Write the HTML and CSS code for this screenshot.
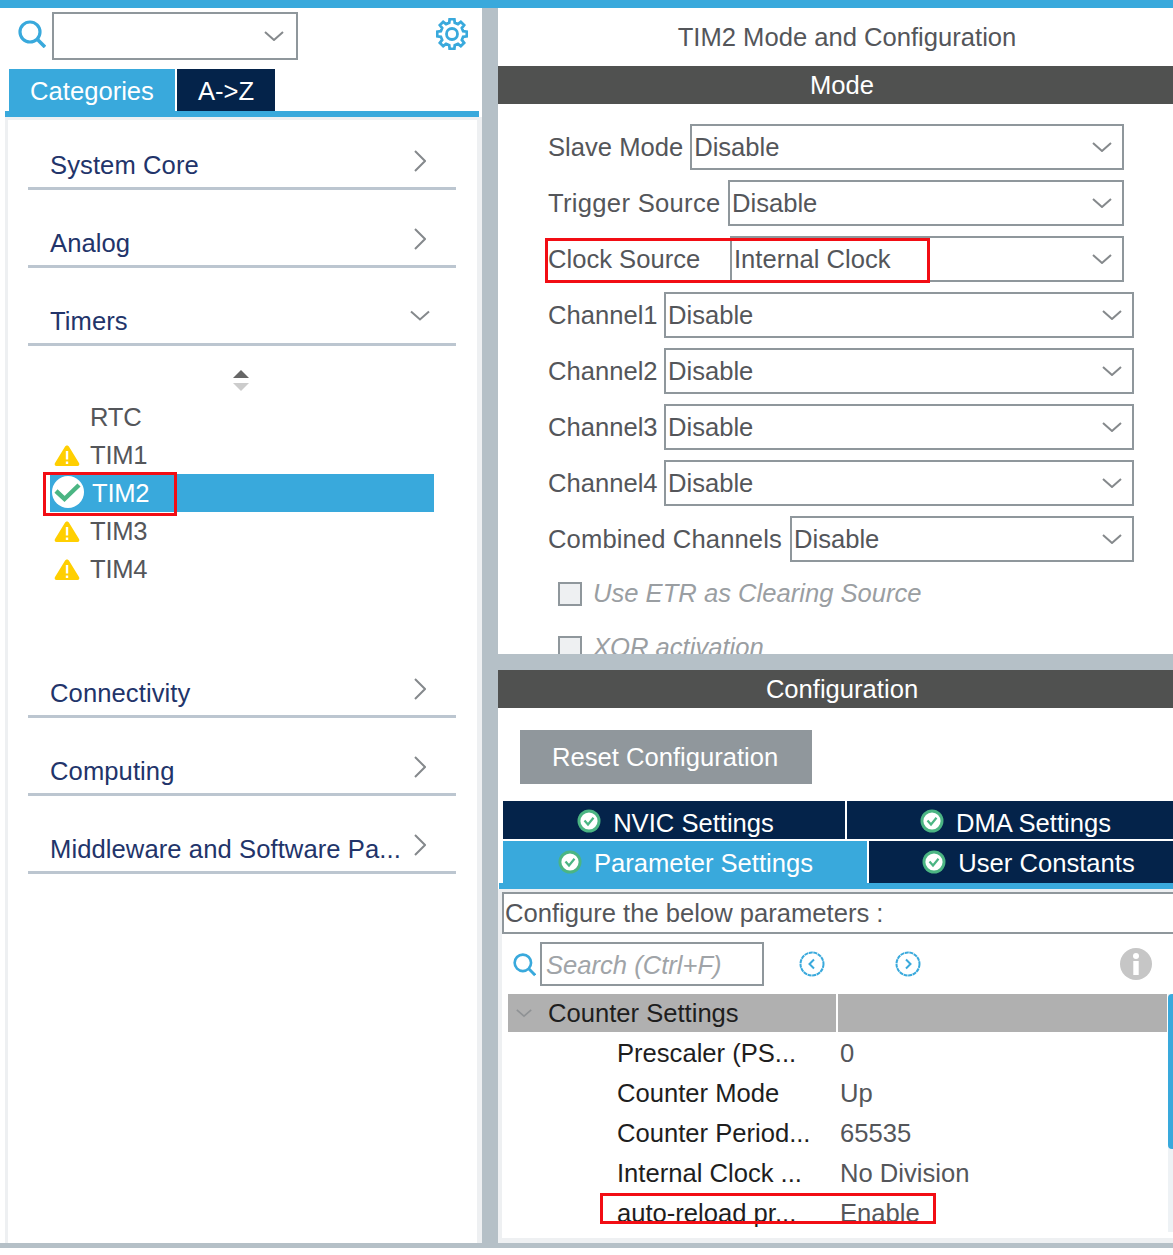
FILE: index.html
```html
<!DOCTYPE html>
<html lang="en">
<head>
<meta charset="utf-8">
<title>TIM2 Mode and Configuration</title>
<link rel="stylesheet" href="styles.css">
</head>
<body>
<svg class="sprite" aria-hidden="true">
  <symbol id="i-search" viewBox="0 0 28 28"><circle cx="12" cy="12" r="10" fill="none" stroke="#39a9dc" stroke-width="3.2"/><path d="M19.5 19.5L27 27" stroke="#39a9dc" stroke-width="3.6" fill="none"/></symbol>
  <symbol id="i-down" viewBox="0 0 20 10"><path d="M1 1L10 9L19 1" fill="none" stroke="#85898c" stroke-width="2"/></symbol>
  <symbol id="i-right" viewBox="0 0 12 22"><path d="M1 1L11 11L1 21" fill="none" stroke="#85898c" stroke-width="2"/></symbol>
  <symbol id="i-warn" viewBox="0 0 26 22"><path d="M13 1.5C14 1.5 14.6 2 15.2 3L25 19C25.8 20.4 25.2 22 23.5 22H2.5C.8 22 .2 20.4 1 19L10.8 3C11.4 2 12 1.5 13 1.5Z" fill="#ffcf01"/><path d="M13 7V15.5M13 17.5V20" stroke="#fff" stroke-width="2.4" fill="none"/></symbol>
  <symbol id="i-ok" viewBox="0 0 24 24"><circle cx="12" cy="12" r="11.5" fill="#4bb583"/><circle cx="12" cy="12" r="8.6" fill="#fff"/><path d="M7.5 11.5L11 15.5L16.5 8.8" fill="none" stroke="#4bb583" stroke-width="2.2"/></symbol>
  <symbol id="i-okbig" viewBox="0 0 32 32"><circle cx="16" cy="16" r="16" fill="#fff"/><path d="M4 15L12.5 23L27 9" fill="none" stroke="#4bb583" stroke-width="4.5"/></symbol>
</svg>

<div class="topbar"></div>
<main class="shell">
  <aside class="left">
    <div class="left-head">
      <svg class="ico-search"><use href="#i-search"/></svg>
      <div class="combo"><svg class="chev-d"><use href="#i-down"/></svg></div>
      <svg class="ico-gear" viewBox="-16 -16 32 32"><polygon fill="none" stroke="#39a9dc" stroke-width="2.8" points="-2.78,-11.16 -2.35,-14.81 2.35,-14.81 2.78,-11.16 5.93,-9.86 8.81,-12.13 12.13,-8.81 9.86,-5.93 11.16,-2.78 14.81,-2.35 14.81,2.35 11.16,2.78 9.86,5.93 12.13,8.81 8.81,12.13 5.93,9.86 2.78,11.16 2.35,14.81 -2.35,14.81 -2.78,11.16 -5.93,9.86 -8.81,12.13 -12.13,8.81 -9.86,5.93 -11.16,2.78 -14.81,2.35 -14.81,-2.35 -11.16,-2.78 -9.86,-5.93 -12.13,-8.81 -8.81,-12.13 -5.93,-9.86"/><circle r="5.5" fill="none" stroke="#39a9dc" stroke-width="2.8"/></svg>
    </div>
    <div class="left-tabs">
      <div class="ltab ltab-on">Categories</div>
      <div class="ltab ltab-az">A-&gt;Z</div>
    </div>
    <div class="left-body">
      <div class="cat"><span>System Core</span><svg class="chev-r"><use href="#i-right"/></svg></div>
      <div class="cat"><span>Analog</span><svg class="chev-r"><use href="#i-right"/></svg></div>
      <div class="cat"><span>Timers</span><svg class="chev-t"><use href="#i-down"/></svg></div>
      <div class="tree">
        <svg class="sorter" viewBox="0 0 16 21"><path d="M8 0L16 8H0Z" fill="#666"/><path d="M0 13H16L8 21Z" fill="#ccc"/></svg>
        <div class="item"><span class="slot"></span>RTC</div>
        <div class="item"><svg class="slot"><use href="#i-warn"/></svg>TIM1</div>
        <div class="item item-on"><svg class="slot-ok"><use href="#i-okbig"/></svg>TIM2<span class="mark mark-tim"></span></div>
        <div class="item"><svg class="slot"><use href="#i-warn"/></svg>TIM3</div>
        <div class="item"><svg class="slot"><use href="#i-warn"/></svg>TIM4</div>
      </div>
      <div class="cat"><span>Connectivity</span><svg class="chev-r"><use href="#i-right"/></svg></div>
      <div class="cat"><span>Computing</span><svg class="chev-r"><use href="#i-right"/></svg></div>
      <div class="cat"><span>Middleware and Software Pa...</span><svg class="chev-r"><use href="#i-right"/></svg></div>
    </div>
  </aside>

  <div class="right">
    <section class="mode">
      <h1 class="title">TIM2 Mode and Configuration</h1>
      <div class="bar">Mode</div>
      <div class="form">
        <div class="row row-n"><label>Slave Mode</label><div class="sel">Disable<svg class="chev-d"><use href="#i-down"/></svg></div></div>
        <div class="row row-n"><label class="lbl-trigger">Trigger Source</label><div class="sel">Disable<svg class="chev-d"><use href="#i-down"/></svg></div></div>
        <div class="row row-n"><label class="lbl-clock">Clock Source</label><div class="sel">Internal Clock<svg class="chev-d"><use href="#i-down"/></svg></div><span class="mark mark-clock"></span></div>
        <div class="row"><label class="lbl-ch">Channel1</label><div class="sel">Disable<svg class="chev-d"><use href="#i-down"/></svg></div></div>
        <div class="row"><label class="lbl-ch">Channel2</label><div class="sel">Disable<svg class="chev-d"><use href="#i-down"/></svg></div></div>
        <div class="row"><label class="lbl-ch">Channel3</label><div class="sel">Disable<svg class="chev-d"><use href="#i-down"/></svg></div></div>
        <div class="row"><label class="lbl-ch">Channel4</label><div class="sel">Disable<svg class="chev-d"><use href="#i-down"/></svg></div></div>
        <div class="row"><label class="lbl-comb">Combined Channels</label><div class="sel">Disable<svg class="chev-d"><use href="#i-down"/></svg></div></div>
        <div class="chk"><span class="box"></span>Use ETR as Clearing Source</div>
        <div class="chk"><span class="box"></span>XOR activation</div>
      </div>
    </section>

    <section class="config">
      <div class="bar">Configuration</div>
      <div class="reset">Reset Configuration</div>
      <div class="tabs tabs-1">
        <div class="tab tab-nvic"><svg class="tab-ok"><use href="#i-ok"/></svg>NVIC Settings</div>
        <div class="tab tab-dma"><svg class="tab-ok"><use href="#i-ok"/></svg>DMA Settings</div>
      </div>
      <div class="tabs tabs-2">
        <div class="tab tab-param"><svg class="tab-ok"><use href="#i-ok"/></svg>Parameter Settings</div>
        <div class="tab tab-user"><svg class="tab-ok"><use href="#i-ok"/></svg>User Constants</div>
      </div>
      <div class="tabline"></div>
      <div class="cfg-body">
        <div class="hint">Configure the below parameters :</div>
        <div class="tools">
          <svg class="t-search"><use href="#i-search"/></svg>
          <div class="find">Search (Ctrl+F)</div>
          <svg class="t-prev" viewBox="0 0 26 26"><circle cx="13" cy="13" r="11.5" fill="none" stroke="#39a9dc" stroke-width="2" stroke-dasharray="4 .6"/><path d="M15 8.5L10.5 13L15 17.5" fill="none" stroke="#39a9dc" stroke-width="2"/></svg>
          <svg class="t-next" viewBox="0 0 26 26"><circle cx="13" cy="13" r="11.5" fill="none" stroke="#39a9dc" stroke-width="2" stroke-dasharray="4 .6"/><path d="M11 8.5L15.5 13L11 17.5" fill="none" stroke="#39a9dc" stroke-width="2"/></svg>
          <svg class="t-info" viewBox="0 0 32 32"><circle cx="16" cy="16" r="16" fill="#c6c6c6"/><circle cx="16" cy="8" r="3" fill="#fff"/><path d="M16 13V27" stroke="#fff" stroke-width="5.4"/></svg>
        </div>
        <div class="grp">
          <div class="grp-a"><svg class="grp-chev"><use href="#i-down"/></svg>Counter Settings</div>
          <div class="grp-b"></div>
        </div>
        <div class="prm"><span class="prm-n">Prescaler (PS...</span><span class="prm-v">0</span></div>
        <div class="prm"><span class="prm-n">Counter Mode</span><span class="prm-v">Up</span></div>
        <div class="prm"><span class="prm-n">Counter Period...</span><span class="prm-v">65535</span></div>
        <div class="prm"><span class="prm-n">Internal Clock ...</span><span class="prm-v">No Division</span></div>
        <div class="prm"><span class="prm-n">auto-reload pr...</span><span class="prm-v">Enable</span><span class="mark mark-auto"></span></div>
        <div class="track"><div class="thumb"></div></div>
      </div>
    </section>
  </div>
</main>
</body>
</html>
```

FILE: styles.css
```css
* { box-sizing: border-box; }
html, body { margin: 0; padding: 0; background: #fff; }
body { font-family: "Liberation Sans", Arial, sans-serif; font-size: 25.6px; color: #54565a; width: 1173px; height: 1255px; overflow: hidden; }
.sprite { position: absolute; width: 0; height: 0; }
svg { display: block; flex: none; }

.topbar { height: 8px; background: #39a9dc; }
.shell { display: flex; height: 1240px; background: #b5c0c7; border-bottom: 5px solid #b5c0c7; }

/* left */
.left { width: 482px; background: #fff; display: flex; flex-direction: column; }
.left-head { height: 61px; position: relative; display: flex; align-items: flex-start; padding: 4px 14px 0 18px; }
.ico-search { width: 28px; height: 28px; margin-top: 8px; }
.combo { width: 246px; height: 48px; margin-left: 6px; border: 2px solid #8f979c; position: relative; }
.chev-d { width: 20px; height: 10px; position: absolute; right: 12px; top: 50%; margin-top: -5px; }
.ico-gear { width: 32px; height: 32px; margin: 6px 0 0 138px; }
.left-tabs { display: flex; gap: 2px; padding-left: 9px; height: 42px; }
.ltab { height: 42px; color: #fff; line-height: 44px; text-align: center; }
.ltab-on { width: 166px; background: #39a9dc; }
.ltab-az { width: 98px; background: #04234a; }
.left-body { flex: 1; margin-left: 5px; width: 474px; border-top: 6px solid #39a9dc; background: #fff; box-shadow: inset 3px 3px 0 #eef0f2; padding: 3px 23px 0 23px; position: relative; }
.left-body::after { content: ""; position: absolute; top: 0; right: -3px; width: 5px; bottom: 0; background: #eef0f2; }
.cat { height: 70px; margin-bottom: 8px; border-bottom: 3px solid #bcc6d0; color: #22346a; display: flex; align-items: flex-end; justify-content: space-between; padding: 0 30px 7px 22px; line-height: 30px; position: relative; letter-spacing: .08px; }
.chev-r { width: 12px; height: 22px; margin-bottom: 8px; }
.chev-t { width: 20px; height: 11px; margin: 0 -4px 15px 0; }
.tree { height: 285px; padding: 16px 22px 0 22px; margin-bottom: 9px; }
.sorter { width: 16px; height: 21px; margin: 0 0 7px 183px; }
.item { height: 38px; display: flex; align-items: center; gap: 10px; padding-left: 4px; position: relative; letter-spacing: -.25px; }
.slot { width: 26px; height: 22px; display: block; flex: none; }
.item-on { background: #39a9dc; color: #fff; gap: 8px; padding-left: 2px; }
.slot-ok { width: 32px; height: 32px; margin-top: -3px; }

/* marks */
.mark { position: absolute; border: 3px solid #f20d14; pointer-events: none; }
.mark-tim { left: -7px; top: -2px; width: 134px; height: 44px; }
.mark-clock { left: -3px; top: 2px; width: 385px; height: 45px; }
.mark-auto { left: 92px; top: 0; width: 336px; height: 31px; }

/* right */
.right { width: 675px; margin-left: 16px; display: flex; flex-direction: column; gap: 16px; overflow: hidden; }
.mode { height: 646px; background: #fff; overflow: hidden; flex: none; }
.title { margin: 0; height: 58px; font: inherit; color: #54565a; display: flex; align-items: center; justify-content: center; padding-left: 23px; }
.bar { height: 38px; background: #505150; color: #fff; display: flex; align-items: center; justify-content: center; padding-left: 13px; }
.form { padding: 20px 0 0 0; }
.row { display: flex; align-items: stretch; gap: 7px; height: 46px; margin: 0 39px 10px 50px; position: relative; }
.row-n { margin-right: 49px; }
.row label { display: flex; align-items: center; white-space: nowrap; }
.row .lbl-clock { width: 175px; }
.row .lbl-trigger { width: 173px; letter-spacing: .3px; }
.row .lbl-ch { width: 109px; }
.row .lbl-comb { width: 235px; letter-spacing: .12px; }
.sel { flex: 1; border: 2px solid #8f979c; display: flex; align-items: center; padding-left: 2px; position: relative; }
.sel .chev-d { right: 10px; }
.chk { display: flex; align-items: flex-start; gap: 11px; height: 24px; line-height: 22px; margin: 20px 0 30px 60px; font-style: italic; color: #9a9ea2; }
.chk + .chk { margin-top: 0; }
.box { width: 24px; height: 24px; background: #eef0f2; border: 2px solid #8f979c; }

.config { flex: 1; background: #fff; display: flex; flex-direction: column; min-height: 0; }
.reset { width: 292px; height: 54px; margin: 22px 0 17px 22px; background: #90979c; color: #fff; display: flex; align-items: center; padding-left: 32px; flex: none; }
.tabs { display: flex; gap: 2px; margin-left: 5px; flex: none; }
.tabs-1 { height: 38px; margin-bottom: 2px; }
.tabs-2 { height: 42px; }
.tab { display: flex; align-items: center; justify-content: center; gap: 12px; color: #fff; background: #04234a; flex: none; padding-left: 3px; }
.tabs-1 .tab { padding-top: 6px; }
.tabs-2 .tab { padding-top: 3px; }
.tab-nvic { width: 342px; }
.tab-dma { width: 334px; }
.tab-param { width: 364px; background: #39a9dc; padding-left: 1px; }
.tab-user { width: 316px; }
.tab-ok { width: 24px; height: 24px; margin-top: -4px; }
.tabline { height: 6px; margin-left: 1px; background: #39a9dc; flex: none; }
.cfg-body { flex: 1; min-height: 0; border-left: 4px solid #eef0f2; border-top: 3px solid #eef0f2; border-bottom: 5px solid #eef0f2; position: relative; color: #3c3e42; }
.hint { width: 702px; height: 42px; border: 2px solid #8f979c; border-right: 0; display: flex; align-items: center; padding-left: 1px; color: #54565a; }
.tools { display: flex; align-items: center; height: 44px; margin-top: 8px; padding-left: 11px; }
.t-search { width: 23px; height: 25px; }
.find { width: 224px; height: 44px; margin-left: 4px; border: 2px solid #8f979c; display: flex; align-items: center; padding: 2px 0 0 4px; font-style: italic; color: #a0a4a8; }
.t-prev { width: 26px; height: 26px; margin-left: 35px; }
.t-next { width: 26px; height: 26px; margin-left: 70px; }
.t-info { width: 32px; height: 32px; margin-left: 199px; }
.grp { display: flex; gap: 2px; height: 38px; margin: 8px 0 1px 6px; color: #1e1e1e; }
.grp-a { width: 328px; background: #b0b0b0; display: flex; align-items: center; padding-left: 8px; gap: 16px; }
.grp-b { width: 329px; background: #b0b0b0; }
.grp-chev { width: 16px; height: 10px; opacity: .75; }
.prm { display: flex; height: 40px; margin-left: 6px; align-items: center; position: relative; }
.prm-n { width: 330px; padding-left: 109px; color: #1e1e1e; white-space: nowrap; }
.prm-v { padding-left: 2px; color: #54565a; }
.track { position: absolute; top: 102px; right: 0; width: 5px; height: 238px; background: #eef2f5; }
.thumb { height: 155px; background: #39a9dc; border-radius: 4px 0 0 4px; }
```
